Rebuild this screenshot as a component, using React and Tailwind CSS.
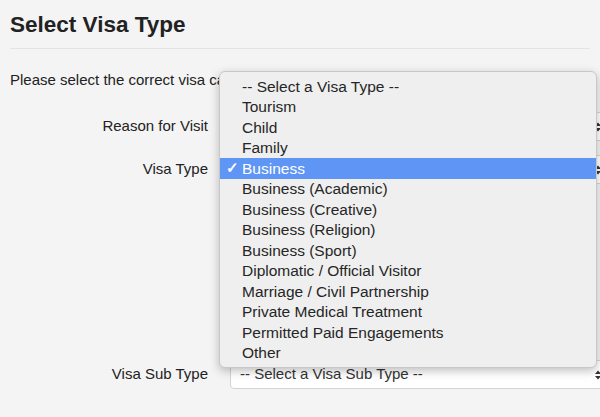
import React from 'react';

const options = [
    '-- Select a Visa Type --',
    'Tourism',
    'Child',
    'Family',
    'Business',
    'Business (Academic)',
    'Business (Creative)',
    'Business (Religion)',
    'Business (Sport)',
    'Diplomatic / Official Visitor',
    'Marriage / Civil Partnership',
    'Private Medical Treatment',
    'Permitted Paid Engagements',
    'Other'
];

const SelectBox = ({ text }) => (
    <div className="flex shrink-0 items-center justify-between h-[29px] w-[375px] bg-white border border-[#d4d4d4] rounded-[4px] pl-[9px] pr-[2px] text-[15px] text-[#333]">
        <span>{text}</span>
        <svg width="8" height="12" viewBox="0 0 8 12" className="text-[#333]">
            <path d="M1 5 L4 1.5 L7 5 Z M1 7 L4 10.5 L7 7 Z" fill="currentColor" />
        </svg>
    </div>
);

const App = () => {
    return (
        <div className="relative min-h-[417px] w-[600px] overflow-hidden bg-[#f4f4f4] px-[10px] pt-[11px] text-[#222]" style={{ fontFamily: '"Liberation Sans", Arial, sans-serif' }}>
            {/* Header */}
            <h1 className="text-[22.5px] font-bold leading-[28px] text-[#222]">Select Visa Type</h1>
            <div className="mt-[9px] h-[1px] bg-[#e3e3e3]"></div>

            <p className="mt-[21px] text-[15px] leading-[20px] whitespace-nowrap">Please select the correct visa category below.</p>

            {/* Form rows */}
            <div className="mt-[22px] flex flex-col">
                <div className="flex items-center gap-[22px]">
                    <label className="w-[198px] shrink-0 text-right text-[15px]">Reason for Visit</label>
                    <SelectBox text="" />
                </div>
                <div className="mt-[14px] flex items-center gap-[22px]">
                    <label className="w-[198px] shrink-0 text-right text-[15px]">Visa Type</label>
                    <SelectBox text="" />
                </div>
                <div className="h-[177px]"></div>
                <div className="-mt-[1px] flex items-center gap-[22px]">
                    <label className="w-[198px] shrink-0 text-right text-[15px]">Visa Sub Type</label>
                    <SelectBox text="-- Select a Visa Sub Type --" />
                </div>
            </div>

            {/* Open dropdown menu */}
            <div className="absolute left-[219px] top-[71px] w-[378px] rounded-[6px] border border-[#c8c8c8] bg-[#efefef] py-[4px] shadow-[0_3px_10px_rgba(0,0,0,0.25)]">
                {options.map((opt) => (
                    <div
                        key={opt}
                        className={`flex h-[20.5px] items-center text-[15.5px] ${opt === 'Business' ? 'bg-[#5f96f5] text-white' : 'text-[#262626]'}`}
                    >
                        <span className="w-[22px] shrink-0 pl-[6px] text-[15px] font-bold">{opt === 'Business' ? '✓' : ''}</span>
                        <span>{opt}</span>
                    </div>
                ))}
            </div>
        </div>
    );
};

export default App;
